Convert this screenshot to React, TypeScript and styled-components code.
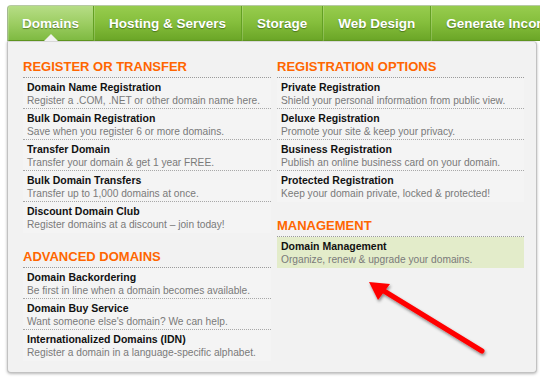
import React from "react";
import styled, { createGlobalStyle, css } from "styled-components";

const Global = createGlobalStyle`
  html, body { margin: 0; padding: 0; background: #ffffff; }
  body { font-family: "Liberation Sans", Arial, Helvetica, sans-serif; }
`;

const Page = styled.div`
  position: relative;
  width: 540px;
  height: 377px;
  overflow: hidden;
  box-sizing: border-box;
  padding: 5px 0 0 7px;
`;

const TabBar = styled.nav`
  display: flex;
  width: 560px;
  height: 36px;
  box-sizing: border-box;
  border-top: 1px solid #b7c9a4;
  border-left: 1px solid #a4b891;
  border-top-left-radius: 4px;
  background: linear-gradient(#97cc4e 0%, #86bf3d 45%, #6aa526 100%);
  box-shadow: inset 0 -1px 0 #5e9420;
`;

const Tab = styled.a<{ $active?: boolean }>`
  position: relative;
  display: flex;
  align-items: center;
  padding: 0 15px;
  font-size: 13.5px;
  font-weight: bold;
  color: #ffffff;
  white-space: nowrap;
  text-shadow: 0 1px 1px rgba(40, 70, 10, 0.55);
  border-right: 1px solid #63a023;
  box-shadow: inset 1px 0 0 rgba(255, 255, 255, 0.18), inset 0 -1px 0 #5e9420;
  ${(p) =>
    p.$active &&
    css`
      padding: 0 14px;
      border-top-left-radius: 3px;
      background: linear-gradient(#b6dd86 0%, #9ccd62 50%, #7db940 100%);
      &::after {
        content: "";
        position: absolute;
        left: 50%;
        bottom: 0;
        margin-left: -7px;
        border-left: 7px solid transparent;
        border-right: 7px solid transparent;
        border-bottom: 7px solid #f2f2f2;
      }
    `}
`;

const Panel = styled.div`
  width: 530px;
  height: 332px;
  box-sizing: border-box;
  border: 1px solid #c2c2c2;
  border-top-color: #d8d8d8;
  border-radius: 0 4px 4px 4px;
  background: #f2f2f2;
  box-shadow: 0 1px 3px rgba(0, 0, 0, 0.28);
  display: grid;
  grid-template-columns: 248px 247px;
  column-gap: 6px;
  align-items: start;
  padding: 17px 0 0 15px;
`;

const Column = styled.div`
  display: flex;
  flex-direction: column;
  gap: 16px;
`;

const Group = styled.section`
  display: flex;
  flex-direction: column;
`;

const Heading = styled.h3`
  margin: 0;
  font-size: 13px;
  line-height: 16px;
  font-weight: bold;
  color: #ff6600;
  text-transform: uppercase;
  padding-bottom: 2px;
  border-bottom: 1px dotted #9b9b9b;
`;

const Item = styled.a<{ $highlight?: boolean }>`
  display: flex;
  flex-direction: column;
  padding: 2px 4px 1px;
  background: ${(p) => (p.$highlight ? "#e3ecca" : "#f4f4f4")};
  border-bottom: 1px dotted #a8a8a8;
  &:last-child {
    border-bottom-color: transparent;
  }
`;

const Title = styled.span`
  font-size: 10.5px;
  line-height: 14px;
  font-weight: bold;
  color: #111111;
  white-space: nowrap;
`;

const Desc = styled.span`
  font-size: 10.2px;
  line-height: 13px;
  color: #7a7a7a;
  white-space: nowrap;
`;

const Arrow = styled.svg`
  position: absolute;
  left: 0;
  top: 0;
  width: 540px;
  height: 377px;
  pointer-events: none;
`;

type Entry = { title: string; desc: string; highlight?: boolean };
type Section = { heading: string; items: Entry[] };

const left: Section[] = [
  {
    heading: "Register or Transfer",
    items: [
      { title: "Domain Name Registration", desc: "Register a .COM, .NET or other domain name here." },
      { title: "Bulk Domain Registration", desc: "Save when you register 6 or more domains." },
      { title: "Transfer Domain", desc: "Transfer your domain & get 1 year FREE." },
      { title: "Bulk Domain Transfers", desc: "Transfer up to 1,000 domains at once." },
      { title: "Discount Domain Club", desc: "Register domains at a discount – join today!" },
    ],
  },
  {
    heading: "Advanced Domains",
    items: [
      { title: "Domain Backordering", desc: "Be first in line when a domain becomes available." },
      { title: "Domain Buy Service", desc: "Want someone else's domain? We can help." },
      { title: "Internationalized Domains (IDN)", desc: "Register a domain in a language-specific alphabet." },
    ],
  },
];

const right: Section[] = [
  {
    heading: "Registration Options",
    items: [
      { title: "Private Registration", desc: "Shield your personal information from public view." },
      { title: "Deluxe Registration", desc: "Promote your site & keep your privacy." },
      { title: "Business Registration", desc: "Publish an online business card on your domain." },
      { title: "Protected Registration", desc: "Keep your domain private, locked & protected!" },
    ],
  },
  {
    heading: "Management",
    items: [
      { title: "Domain Management", desc: "Organize, renew & upgrade your domains.", highlight: true },
    ],
  },
];

const tabs = ["Domains", "Hosting & Servers", "Storage", "Web Design", "Generate Income"];

function renderColumn(sections: Section[]) {
  return (
    <Column>
      {sections.map((s) => (
        <Group key={s.heading}>
          <Heading>{s.heading}</Heading>
          {s.items.map((it) => (
            <Item key={it.title} $highlight={it.highlight}>
              <Title>{it.title}</Title>
              <Desc>{it.desc}</Desc>
            </Item>
          ))}
        </Group>
      ))}
    </Column>
  );
}

export default function App() {
  return (
    <>
      <Global />
      <Page>
        <TabBar>
          {tabs.map((t, i) => (
            <Tab key={t} $active={i === 0}>
              {t}
            </Tab>
          ))}
        </TabBar>
        <Panel>
          {renderColumn(left)}
          {renderColumn(right)}
        </Panel>
        <Arrow viewBox="0 0 540 377">
          <defs>
            <filter id="arrowShadow" x="-20%" y="-20%" width="140%" height="140%">
              <feDropShadow dx="1" dy="2" stdDeviation="1.5" floodColor="#000" floodOpacity="0.45" />
            </filter>
          </defs>
          <g filter="url(#arrowShadow)">
            <line x1="482" y1="351" x2="384" y2="291" stroke="#ff0000" strokeWidth="5" strokeLinecap="round" />
            <polygon points="369,282 390,284 378,300" fill="#ff0000" />
          </g>
        </Arrow>
      </Page>
    </>
  );
}
